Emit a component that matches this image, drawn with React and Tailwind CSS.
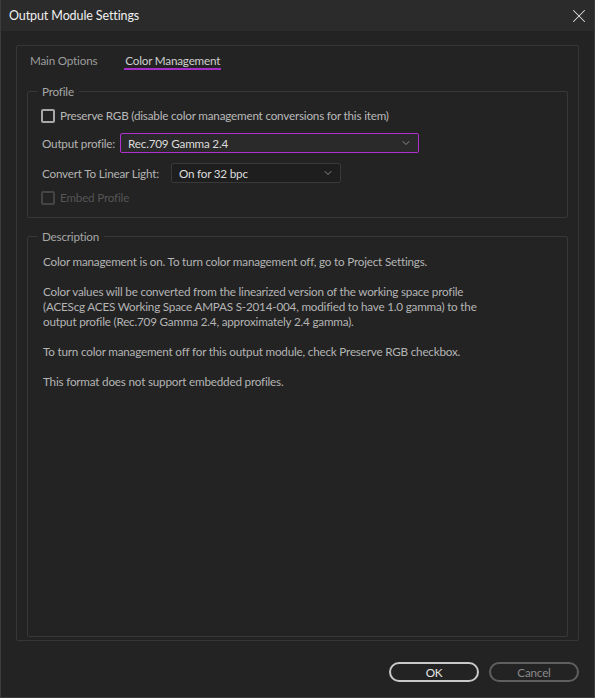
import { ChevronDown, X } from 'lucide-react'

const font = { fontFamily: 'Lato, "Open Sans", sans-serif' }

function Checkbox({ label, disabled }) {
  return (
    <label className={`flex items-center gap-[5px] h-[15px] ${disabled ? 'text-[#555555]' : 'text-[#b9b9b9]'}`}>
      <span className={`w-[14px] h-[14px] rounded-[2px] border-2 ${disabled ? 'border-[#444444]' : 'border-[#a8a8a8]'}`} />
      <span>{label}</span>
    </label>
  )
}

function Select({ value, active, className }) {
  return (
    <div
      className={`flex items-center justify-between h-[20px] pl-[7px] pr-[6px] rounded-[2px] border ${
        active ? 'border-[#b12fd0] bg-[#2a2a2a]' : 'border-[#393939] bg-[#1e1e1e]'
      } ${className}`}
    >
      <span className="text-[#dcdcdc]">{value}</span>
      <ChevronDown size={12} strokeWidth={1.5} className="text-[#a8a8a8]" />
    </div>
  )
}

export default function App() {
  return (
    <div
      className="w-[595px] h-[698px] bg-[#232323] border border-[#3c3c3c] border-t-0 flex flex-col text-[11.7px] leading-[15px] tracking-[-0.2px]"
      style={font}
    >
      {/* title bar */}
      <div className="h-[31px] bg-[#2b2b2b] flex items-center justify-between pl-[8px] pr-[4px] shrink-0">
        <span className="text-[#f0f0f0] text-[12.5px] tracking-[-0.1px]">Output Module Settings</span>
        <X size={22} strokeWidth={1.1} className="text-[#e0e0e0]" />
      </div>

      <div className="flex-1 flex flex-col px-[15px] pt-[14px] pb-[15px]">
        {/* tab panel */}
        <div className="h-[596px] border border-[#363636] rounded-[2px] flex flex-col px-[10px]">
          <div className="flex gap-[27px] pl-[3px] pt-[7px] h-[27px]">
            <span className="text-[#9c9c9c]">Main Options</span>
            <span className="text-[#cfcfcf] border-b-2 border-[#a52cc7] h-[17px] px-[1px]">Color Management</span>
          </div>

          <fieldset className="border border-[#383838] rounded-[2px] pl-[13px] pr-[14px] pb-[12px] mt-[11px]">
            <legend className="text-[#a6a6a6] px-[5px] ml-[-4px]">Profile</legend>
            <div className="flex flex-col mt-[9px]">
              <Checkbox label="Preserve RGB (disable color management conversions for this item)" />
              <div className="flex items-center mt-[10px] gap-[5px]">
                <span className="text-[#b3b3b3] pl-[1px]">Output profile:</span>
                <Select value="Rec.709 Gamma 2.4" active className="w-[299px]" />
              </div>
              <div className="flex items-center mt-[10px] gap-[12px]">
                <span className="text-[#b3b3b3] pl-[1px]">Convert To Linear Light:</span>
                <Select value="On for 32 bpc" className="w-[170px]" />
              </div>
              <div className="mt-[7px]">
                <Checkbox label="Embed Profile" disabled />
              </div>
            </div>
          </fieldset>

          <fieldset className="flex-1 border border-[#383838] rounded-[2px] pl-[15px] pr-[16px] mt-[11px] mb-[3px]">
            <legend className="text-[#a6a6a6] px-[5px] ml-[-6px]">Description</legend>
            <div className="text-[#b4b4b4] flex flex-col mt-[10px]">
              <p>Color management is on. To turn color management off, go to Project Settings.</p>
              <p className="mt-[15px] w-[440px]">
                Color values will be converted from the linearized version of the working space profile (ACEScg ACES
                Working Space AMPAS S-2014-004, modified to have 1.0 gamma) to the output profile (Rec.709 Gamma 2.4,
                approximately 2.4 gamma).
              </p>
              <p className="mt-[15px]">To turn color management off for this output module, check Preserve RGB checkbox.</p>
              <p className="mt-[15px]">This format does not support embedded profiles.</p>
            </div>
          </fieldset>
        </div>

        <div className="flex justify-end gap-[10px] mt-[21px]">
          <button className="w-[90px] h-[20px] rounded-full border-2 border-[#c9c9c9] text-[#e6e6e6] leading-[16px]">OK</button>
          <button className="w-[90px] h-[20px] rounded-full border-2 border-[#5f5f5f] text-[#8a8a8a] leading-[16px]">Cancel</button>
        </div>
      </div>
    </div>
  )
}
